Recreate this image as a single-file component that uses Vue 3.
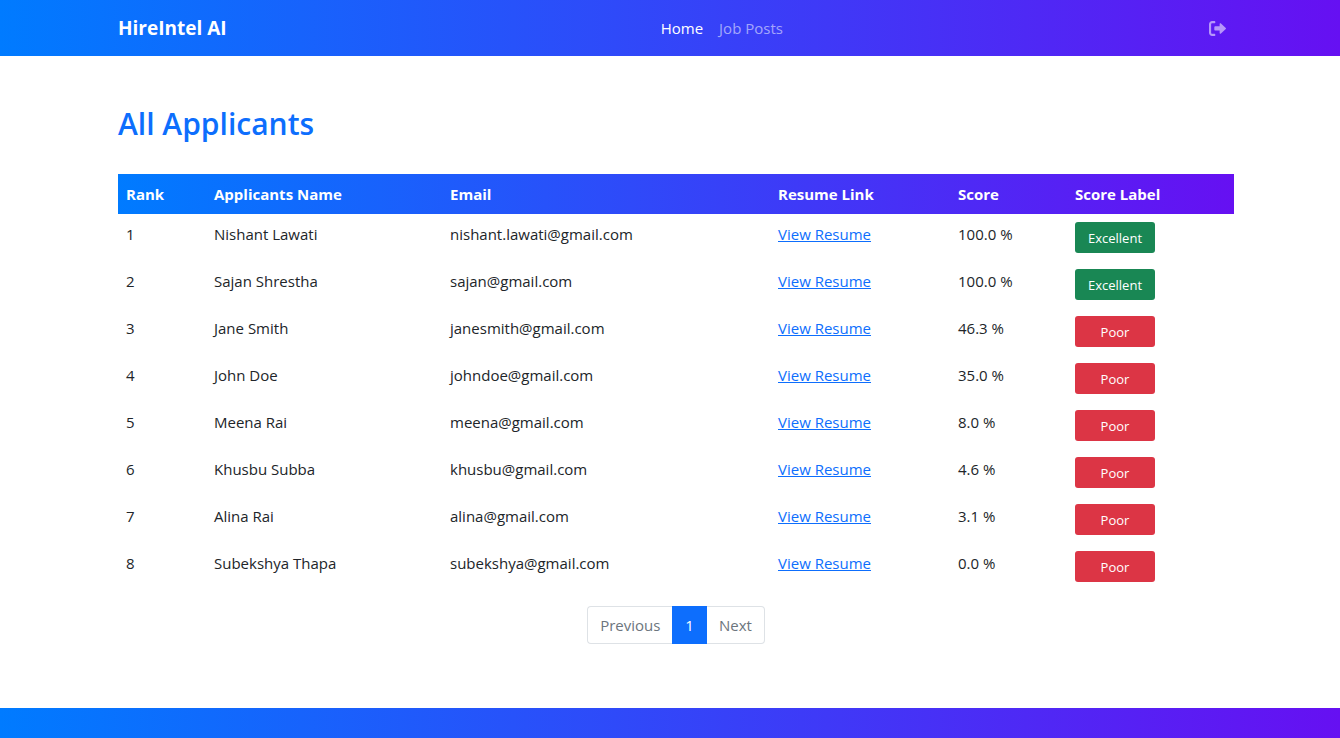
<script setup>
const columns = [
  { key: 'rank', label: 'Rank' },
  { key: 'name', label: 'Applicants Name' },
  { key: 'email', label: 'Email' },
  { key: 'resume', label: 'Resume Link' },
  { key: 'score', label: 'Score' },
  { key: 'label', label: 'Score Label' },
]

const applicants = [
  { name: 'Nishant Lawati', email: 'nishant.lawati@gmail.com', score: '100.0', label: 'Excellent' },
  { name: 'Sajan Shrestha', email: 'sajan@gmail.com', score: '100.0', label: 'Excellent' },
  { name: 'Jane Smith', email: 'janesmith@gmail.com', score: '46.3', label: 'Poor' },
  { name: 'John Doe', email: 'johndoe@gmail.com', score: '35.0', label: 'Poor' },
  { name: 'Meena Rai', email: 'meena@gmail.com', score: '8.0', label: 'Poor' },
  { name: 'Khusbu Subba', email: 'khusbu@gmail.com', score: '4.6', label: 'Poor' },
  { name: 'Alina Rai', email: 'alina@gmail.com', score: '3.1', label: 'Poor' },
  { name: 'Subekshya Thapa', email: 'subekshya@gmail.com', score: '0.0', label: 'Poor' },
]
</script>

<template>
  <div class="page">
    <header class="topbar">
      <div class="container topbar-inner">
        <a class="brand" href="#">HireIntel AI</a>
        <nav class="nav">
          <a class="nav-link active" href="#" aria-current="page">Home</a>
          <a class="nav-link" href="#">Job Posts</a>
        </nav>
        <a class="nav-link logout" href="#" aria-label="Log out">
          <svg viewBox="0 0 512 512" width="17" height="17" fill="currentColor" aria-hidden="true">
            <path d="M96 480h64C177.700 480 192 465.700 192 448S177.700 416 160 416H96c-17.670 0-32-14.330-32-32V128c0-17.670 14.330-32 32-32h64C177.700 96 192 81.670 192 64S177.700 32 160 32H96C42.980 32 0 74.980 0 128v256C0 437 42.980 480 96 480zM504.800 238.500l-144.100-136c-6.975-6.578-17.200-8.406-26-4.594c-8.803 3.797-14.510 12.470-14.510 22.050l-.0918 72l-128-.001c-17.690 0-32.020 14.330-32.020 32v64c0 17.670 14.340 32 32.020 32l128 .001l.0918 71.100c0 9.578 5.707 18.250 14.510 22.050c8.803 3.813 19.030 1.984 26-4.594l144.100-136C514.400 264.400 514.400 247.600 504.800 238.500z" />
          </svg>
        </a>
      </div>
    </header>

    <main class="content">
      <div class="container">
        <h1 class="title">All Applicants</h1>
        <table class="table">
          <colgroup>
            <col v-for="c in columns" :key="c.key" :class="'col-' + c.key" />
          </colgroup>
          <thead>
            <tr>
              <th v-for="c in columns" :key="c.key" scope="col">{{ c.label }}</th>
            </tr>
          </thead>
          <tbody>
            <tr v-for="(a, i) in applicants" :key="a.email">
              <td>{{ i + 1 }}</td>
              <td>{{ a.name }}</td>
              <td>{{ a.email }}</td>
              <td><a class="resume-link" href="#">View Resume</a></td>
              <td>{{ a.score }} %</td>
              <td>
                <button type="button" class="badge" :class="a.label.toLowerCase()">{{ a.label }}</button>
              </td>
            </tr>
          </tbody>
        </table>
        <nav class="pagination" aria-label="Applicant pages">
          <button type="button" class="page-btn">Previous</button>
          <button type="button" class="page-btn current" aria-current="page">1</button>
          <button type="button" class="page-btn">Next</button>
        </nav>
      </div>
    </main>

    <footer class="footer"></footer>
  </div>
</template>

<style>
body {
  margin: 0;
  background: #fff;
}
</style>

<style scoped>
.page {
  min-height: 100vh;
  display: flex;
  flex-direction: column;
  font-family: "Open Sans", "Noto Sans", sans-serif;
  font-size: 15px;
  line-height: 24px;
  color: #212529;
}
.topbar,
.footer {
  background: linear-gradient(90deg, #007bff, #6610f2);
}
.topbar,
.content {
  padding-left: 12px;
}
.container {
  box-sizing: border-box;
  width: 100%;
  max-width: 1116px;
  margin: 0 auto;
}
.topbar-inner {
  height: 56px;
  display: flex;
  align-items: center;
  justify-content: space-between;
}
.brand {
  margin-right: 16px;
  font-size: 19px;
  line-height: 30px;
  font-weight: 700;
  color: #fff;
  text-decoration: none;
}
.nav {
  display: flex;
}
.nav-link {
  padding: 8px;
  color: rgba(255, 255, 255, 0.55);
  text-decoration: none;
}
.nav-link.active {
  color: #fff;
}
.logout {
  display: flex;
}
.content {
  padding-top: 48px;
  padding-bottom: 64px;
}
.title {
  margin: 0 0 30px;
  font-size: 30px;
  line-height: 40px;
  font-weight: 600;
  color: #0d6efd;
}
.table {
  width: 100%;
  table-layout: fixed;
  border-collapse: collapse;
}
.col-rank { width: 88px; }
.col-name { width: 236px; }
.col-email { width: 328px; }
.col-resume { width: 180px; }
.col-score { width: 117px; }
.col-label { width: 167px; }
.table thead {
  background: linear-gradient(90deg, #007bff, #6610f2);
  color: #fff;
}
.table th,
.table td {
  padding: 8px;
  text-align: left;
  vertical-align: top;
}
.table th {
  font-weight: 700;
}
.resume-link {
  color: #0d6efd;
  text-decoration: underline;
}
.badge {
  display: block;
  width: 80px;
  height: 31px;
  padding: 0;
  border: 0;
  border-radius: 3px;
  font: inherit;
  font-size: 13px;
  color: #fff;
}
.excellent {
  background: #198754;
}
.poor {
  background: #dc3545;
}
.pagination {
  display: flex;
  justify-content: center;
  margin-top: 16px;
}
.page-btn {
  padding: 6px 12px;
  border: 1px solid #dee2e6;
  background: #fff;
  font: inherit;
  color: #6c757d;
}
.page-btn:first-child {
  border-right: 0;
  border-radius: 4px 0 0 4px;
}
.page-btn:last-child {
  border-left: 0;
  border-radius: 0 4px 4px 0;
}
.page-btn.current {
  border-color: #0d6efd;
  background: #0d6efd;
  color: #fff;
}
.footer {
  height: 30px;
  margin-top: auto;
}
</style>
